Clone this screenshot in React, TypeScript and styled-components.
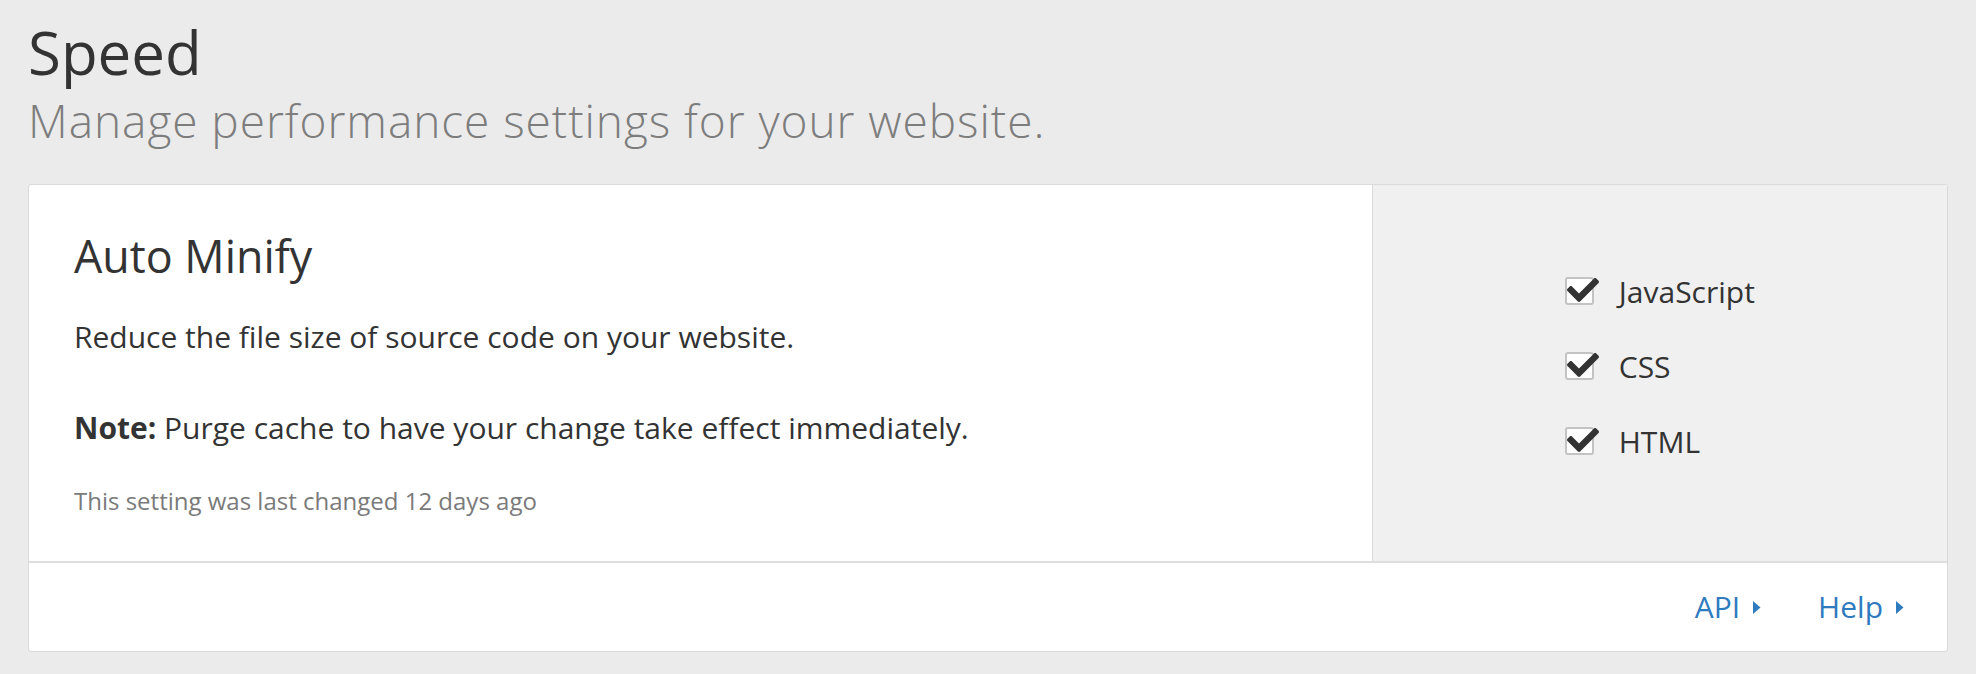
import styled, { createGlobalStyle } from 'styled-components'
import { FaCheck } from 'react-icons/fa'

const GlobalStyle = createGlobalStyle`
  html, body {
    margin: 0;
    padding: 0;
    background: #ebebeb;
  }
  body {
    font-family: 'Open Sans', 'Liberation Sans', sans-serif;
    color: #333;
  }
  * {
    box-sizing: border-box;
  }
`

const Page = styled.main`
  padding: 15px 28px 24px;
`

const Title = styled.h1`
  margin: 0;
  font-size: 60px;
  font-weight: 400;
  line-height: 74px;
  color: #333;
`

const Subtitle = styled.p`
  margin: 4px 0 37px;
  font-size: 46px;
  font-weight: 300;
  letter-spacing: 0.95px;
  line-height: 54px;
  color: #7d7d7d;
`

const Card = styled.section`
  background: #fff;
  border: 1px solid #dadada;
  border-radius: 3px;
  overflow: hidden;
`

const CardBody = styled.div`
  display: grid;
  grid-template-columns: 7fr 3fr;
`

const Content = styled.div`
  padding: 44px 45px 43px;
`

const SettingTitle = styled.h2`
  margin: 0 0 33px;
  font-size: 44.8px;
  font-weight: 400;
  line-height: 54px;
  color: #333;
`

const Text = styled.p<{ $gap: number }>`
  margin: 0 0 ${(p) => p.$gap}px;
  font-size: 30px;
  line-height: 42px;
  color: #333;

  strong {
    font-weight: 700;
  }
`

const Changed = styled.p`
  margin: 0;
  font-size: 24px;
  line-height: 34px;
  color: #7a7a7a;
`

const Control = styled.div`
  background: #f0f0f0;
  border-left: 1px solid #dadada;
  padding-bottom: 14px;
  display: flex;
  align-items: center;
  justify-content: center;
`

const CheckList = styled.ul`
  list-style: none;
  margin: 0;
  padding: 0;
  display: flex;
  flex-direction: column;
  gap: 30px;
`

const CheckRow = styled.li`
  display: flex;
  align-items: center;
  gap: 25px;
  font-size: 30px;
  line-height: 45px;
  color: #333;
`

const Box = styled.span`
  position: relative;
  width: 29px;
  height: 28px;
  border: 2px solid #c3c3c3;
  border-radius: 3px;
  background: #fff;
  flex: none;

  svg {
    position: absolute;
    left: 0px;
    top: -5px;
    color: #333;
  }
`

const Footer = styled.footer`
  height: 90px;
  border-top: 2px solid #dedede;
  padding: 0 43px;
  display: flex;
  justify-content: flex-end;
  align-items: center;
  gap: 57px;
`

const FooterLink = styled.a`
  display: flex;
  align-items: center;
  gap: 13px;
  font-size: 30px;
  line-height: 42px;
  color: #2f7bbf;
  text-decoration: none;
`

const Caret = () => (
  <svg width="8" height="13" viewBox="0 0 8 13">
    <polygon points="0,0 7.5,6.5 0,13" fill="currentColor" />
  </svg>
)

const options = ['JavaScript', 'CSS', 'HTML']

export default function App() {
  return (
    <>
      <GlobalStyle />
      <Page>
        <Title>Speed</Title>
        <Subtitle>Manage performance settings for your website.</Subtitle>
        <Card>
          <CardBody>
            <Content>
              <SettingTitle>Auto Minify</SettingTitle>
              <Text $gap={49}>Reduce the file size of source code on your website.</Text>
              <Text $gap={35}>
                <strong>Note:</strong> Purge cache to have your change take effect immediately.
              </Text>
              <Changed>This setting was last changed 12 days ago</Changed>
            </Content>
            <Control>
              <CheckList>
                {options.map((o) => (
                  <CheckRow key={o}>
                    <Box>
                      <FaCheck size={32} />
                    </Box>
                    {o}
                  </CheckRow>
                ))}
              </CheckList>
            </Control>
          </CardBody>
          <Footer>
            <FooterLink href="#">
              API <Caret />
            </FooterLink>
            <FooterLink href="#">
              Help <Caret />
            </FooterLink>
          </Footer>
        </Card>
      </Page>
    </>
  )
}
